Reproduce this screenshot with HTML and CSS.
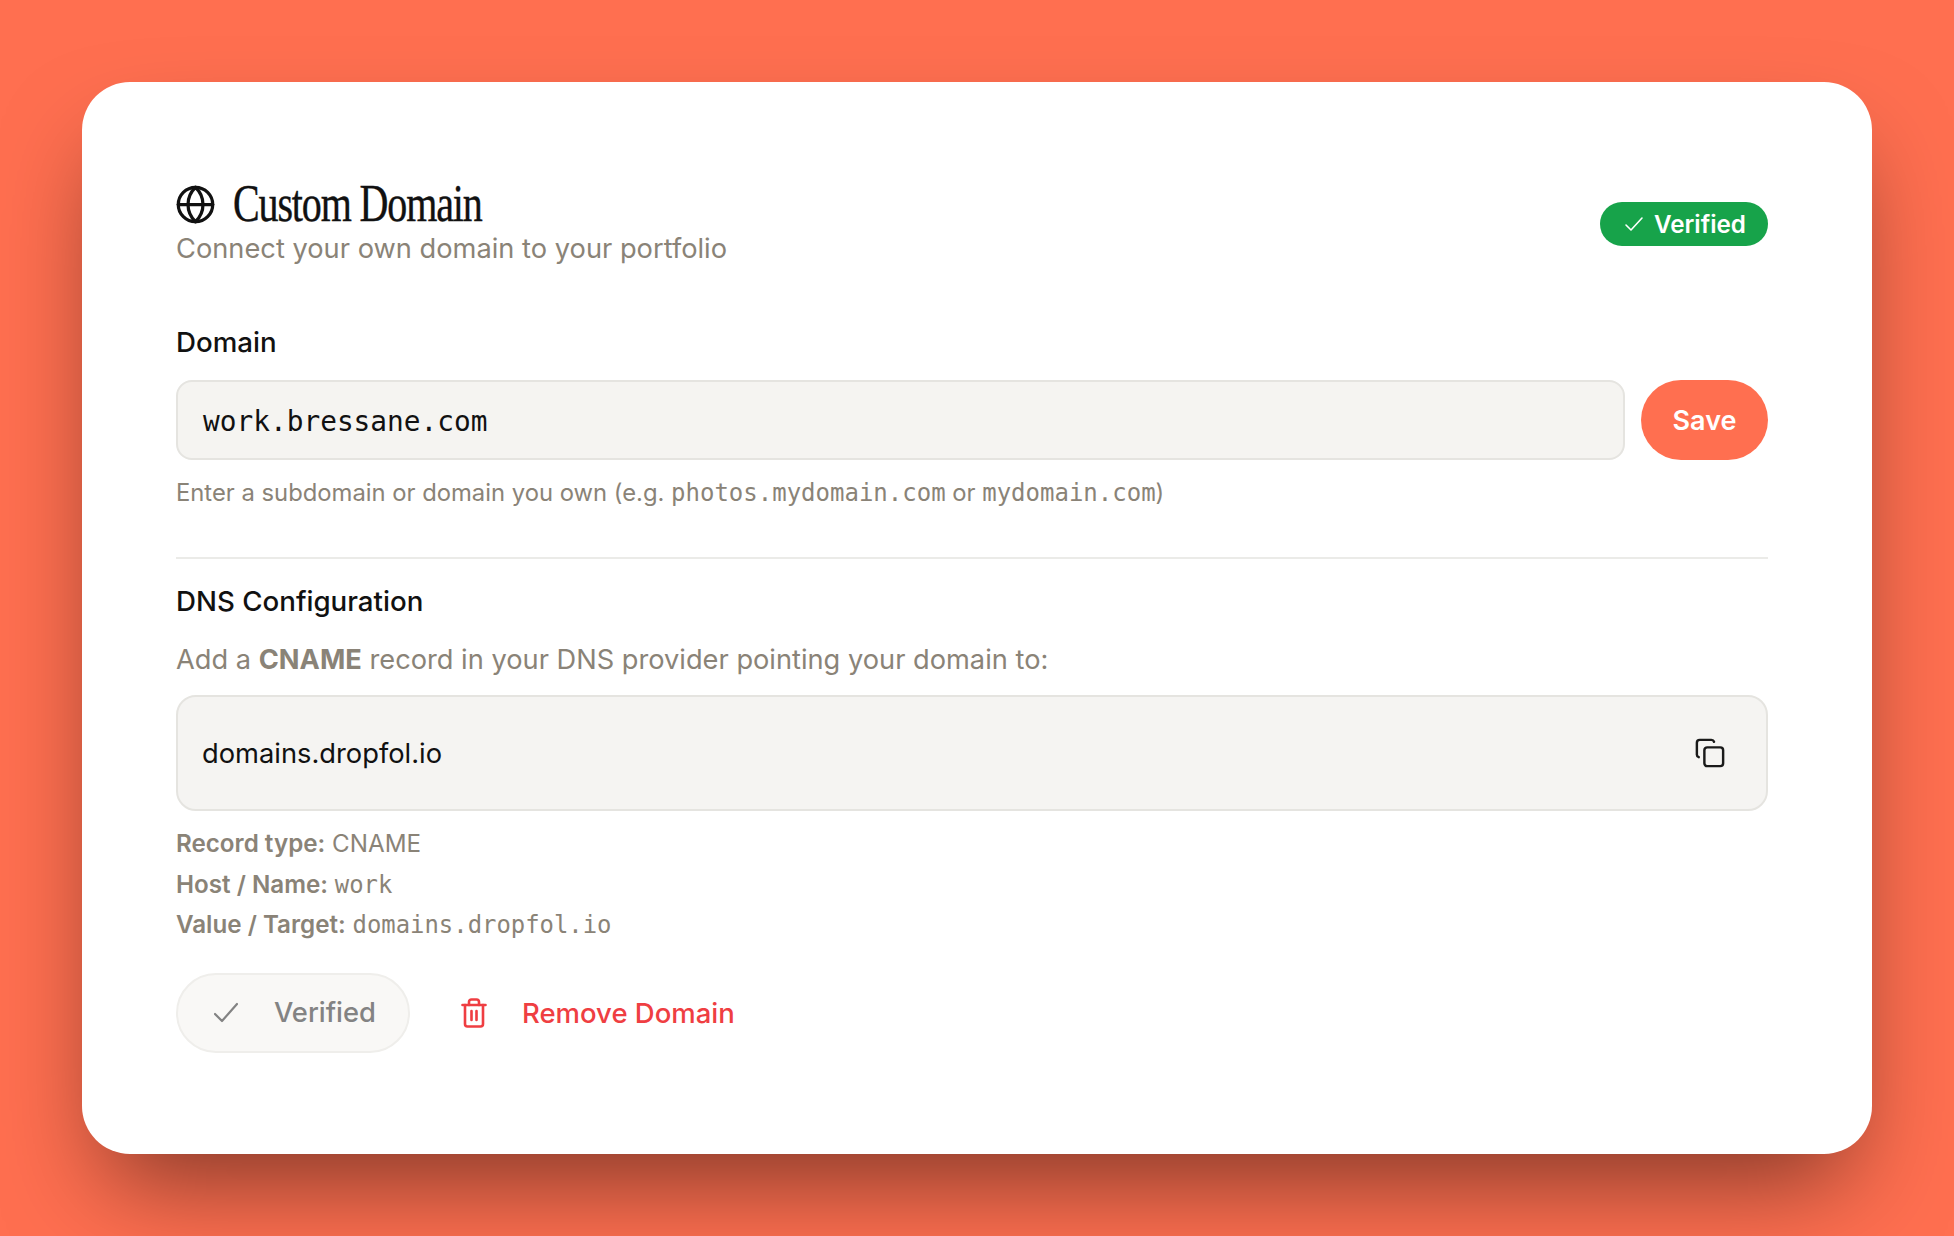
FILE: index.html
```html
<!DOCTYPE html>
<html lang="en">
<head>
  <meta charset="UTF-8" />
  <meta name="viewport" content="width=device-width, initial-scale=1.0" />
  <title>Custom Domain</title>
  <link rel="stylesheet" href="styles.css">
</head>
<body>
  <div class="card">
    <div class="header">
      <div>
        <div class="title-row">
          <svg class="globe" viewBox="0 0 24 24" fill="none" stroke="currentColor" stroke-width="2" stroke-linecap="round" stroke-linejoin="round">
            <circle cx="12" cy="12" r="10.6" />
            <path d="M1.4 12h21.2" />
            <path d="M12 1.4c3 2.9 4.6 6.6 4.6 10.6s-1.6 7.7-4.6 10.6c-3-2.9-4.6-6.6-4.6-10.6s1.6-7.700 4.600-10.600z" />
          </svg>
          <h1 class="title">Custom Domain</h1>
        </div>
        <div class="subtitle">Connect your own domain to your portfolio</div>
      </div>
      <div class="badge">
        <svg class="badge-check" viewBox="0 0 20 20" fill="none" stroke="currentColor" stroke-width="1.6" stroke-linecap="round" stroke-linejoin="round">
          <path d="M2 11l5 5L18 4" />
        </svg>
        Verified
      </div>
    </div>

    <div class="label">Domain</div>
    <div class="input-row">
      <div class="input">work.bressane.com</div>
      <button class="save">Save</button>
    </div>
    <div class="hint">Enter a subdomain or domain you own (e.g. <code>photos.mydomain.com</code> or <code>mydomain.com</code>)</div>

    <div class="divider"></div>

    <div class="section-title">DNS Configuration</div>
    <div class="section-text">Add a <strong>CNAME</strong> record in your DNS provider pointing your domain to:</div>
    <div class="target">
      <span>domains.dropfol.io</span>
      <svg class="copy" viewBox="0 0 32 32" fill="none" stroke="currentColor" stroke-width="2.6" stroke-linecap="round" stroke-linejoin="round">
        <rect x="10" y="10" width="20" height="20" rx="3" />
        <path d="M4 20.500c-1.200-.4-2-1.400-2-2.700V5c0-1.700 1.300-3 3-3h12.500c1.300 0 2.400.8 2.800 2" />
      </svg>
    </div>

    <div class="details">
      <div><strong>Record type:</strong> CNAME</div>
      <div><strong>Host / Name:</strong> <code>work</code></div>
      <div><strong>Value / Target:</strong> <code>domains.dropfol.io</code></div>
    </div>

    <div class="actions">
      <button class="verified-btn">
        <svg class="verified-check" viewBox="0 0 24 24" fill="none" stroke="currentColor" stroke-width="2.200" stroke-linecap="round" stroke-linejoin="round">
          <path d="M1 13l7 7L23 3" />
        </svg>
        Verified
      </button>
      <button class="remove-btn">
        <svg class="trash" viewBox="0 0 26 30" fill="none" stroke="currentColor" stroke-width="2.600" stroke-linecap="round" stroke-linejoin="round">
          <path d="M1.500 7h23" />
          <path d="M8 7V4c0-1.500 1-2.500 2.500-2.500h5C17 1.500 18 2.500 18 4v3" />
          <path d="M4 7v19c0 1.500 1 2.500 2.500 2.500h13c1.500 0 2.500-1 2.500-2.500V7" />
          <path d="M10.500 13v9M15.500 13v9" />
        </svg>
        Remove Domain
      </button>
    </div>
  </div>
</body>
</html>
```

FILE: styles.css
```css
* {
  box-sizing: border-box;
}
html, body {
  height: 100%;
}
body {
  margin: 0;
  padding: 82px;
  background: #ff6f50;
  font-family: Inter, sans-serif;
  overflow: hidden;
}
.card {
  width: 1790px;
  height: 1072px;
  padding: 98px 104px 0 94px;
  background: white;
  border-radius: 48px;
  box-shadow: 0 50px 100px -24px rgba(0, 0, 0, 0.5);
  color: #8a8377;
}
.header {
  display: flex;
  justify-content: space-between;
  align-items: center;
}
.title-row {
  display: flex;
  align-items: center;
  height: 48px;
  gap: 18px;
  color: #111;
}
.globe {
  width: 39px;
  height: 39px;
  flex-shrink: 0;
}
.title {
  margin: 0;
  font-family: "Liberation Serif", serif;
  font-size: 52px;
  font-weight: normal;
  line-height: 48px;
  letter-spacing: -1.5px;
  transform: scaleX(0.77);
  transform-origin: left center;
  -webkit-text-stroke: 0.4px #111;
}
.subtitle {
  margin-top: 1px;
  font-size: 27.25px;
  line-height: 40px;
}
.badge {
  display: flex;
  align-items: center;
  gap: 10px;
  height: 44px;
  width: 168px;
  margin-bottom: 1px;
  padding-left: 24px;
  background: #17a34a;
  color: white;
  border-radius: 22px;
  font-size: 24.2px;
  font-weight: 600;
}
.badge-check {
  width: 20px;
  height: 20px;
}
.label, .section-title {
  font-size: 27.7px;
  font-weight: 500;
  line-height: 40px;
  color: #111;
}
.label {
  margin-top: 53px;
  margin-bottom: 18px;
}
.input-row {
  display: flex;
  gap: 16px;
}
.input {
  flex-grow: 1;
  height: 80px;
  padding: 2px 25px 0;
  display: flex;
  align-items: center;
  background: #f5f4f1;
  border: 2px solid #e5e4e0;
  border-radius: 16px;
  font-family: "DejaVu Sans Mono", monospace;
  font-size: 27.8px;
  color: #111;
}
.save {
  width: 127px;
  height: 80px;
  border: 0;
  border-radius: 40px;
  background: #ff6f50;
  color: white;
  font-family: inherit;
  font-size: 27px;
  font-weight: 600;
}
code {
  font-family: "DejaVu Sans Mono", monospace;
  font-size: 24px;
  line-height: 1;
}
.hint {
  margin-top: 15px;
  font-size: 23.8px;
  line-height: 36px;
}
.divider {
  height: 2px;
  margin-top: 46px;
  background: #ebebe8;
}
.section-title {
  margin-top: 22px;
}
.section-text {
  margin-top: 19px;
  font-size: 27.23px;
  line-height: 40px;
}
.section-text strong {
  font-weight: 700;
}
.target {
  display: flex;
  justify-content: space-between;
  align-items: center;
  height: 116px;
  margin-top: 15px;
  padding: 0 41px 0 24px;
  background: #f5f4f2;
  border: 2px solid #e5e4e0;
  border-radius: 20px;
  font-size: 27.3px;
  color: #111;
}
.copy {
  width: 30px;
  height: 30px;
  color: #1a1a1a;
}
.details {
  margin-top: 13px;
  font-size: 24.2px;
  line-height: 40.5px;
}
.details strong {
  font-weight: 600;
}
.details code {
  font-size: 23.9px;
}
.actions {
  display: flex;
  align-items: center;
  gap: 51px;
  margin-top: 27px;
}
.verified-btn {
  display: flex;
  align-items: center;
  gap: 36px;
  width: 234px;
  height: 80px;
  padding-left: 36px;
  background: #f9f8f6;
  border: 2px solid #efeeeb;
  border-radius: 40px;
  color: #838383;
  font-family: inherit;
  font-size: 27.3px;
  font-weight: 500;
}
.verified-check {
  width: 24px;
  height: 24px;
  flex-shrink: 0;
}
.remove-btn {
  display: flex;
  align-items: center;
  gap: 35px;
  padding: 0;
  border: 0;
  background: none;
  color: #ef3e42;
  font-family: inherit;
  font-size: 27.5px;
  font-weight: 500;
}
.trash {
  width: 26px;
  height: 30px;
}
```
